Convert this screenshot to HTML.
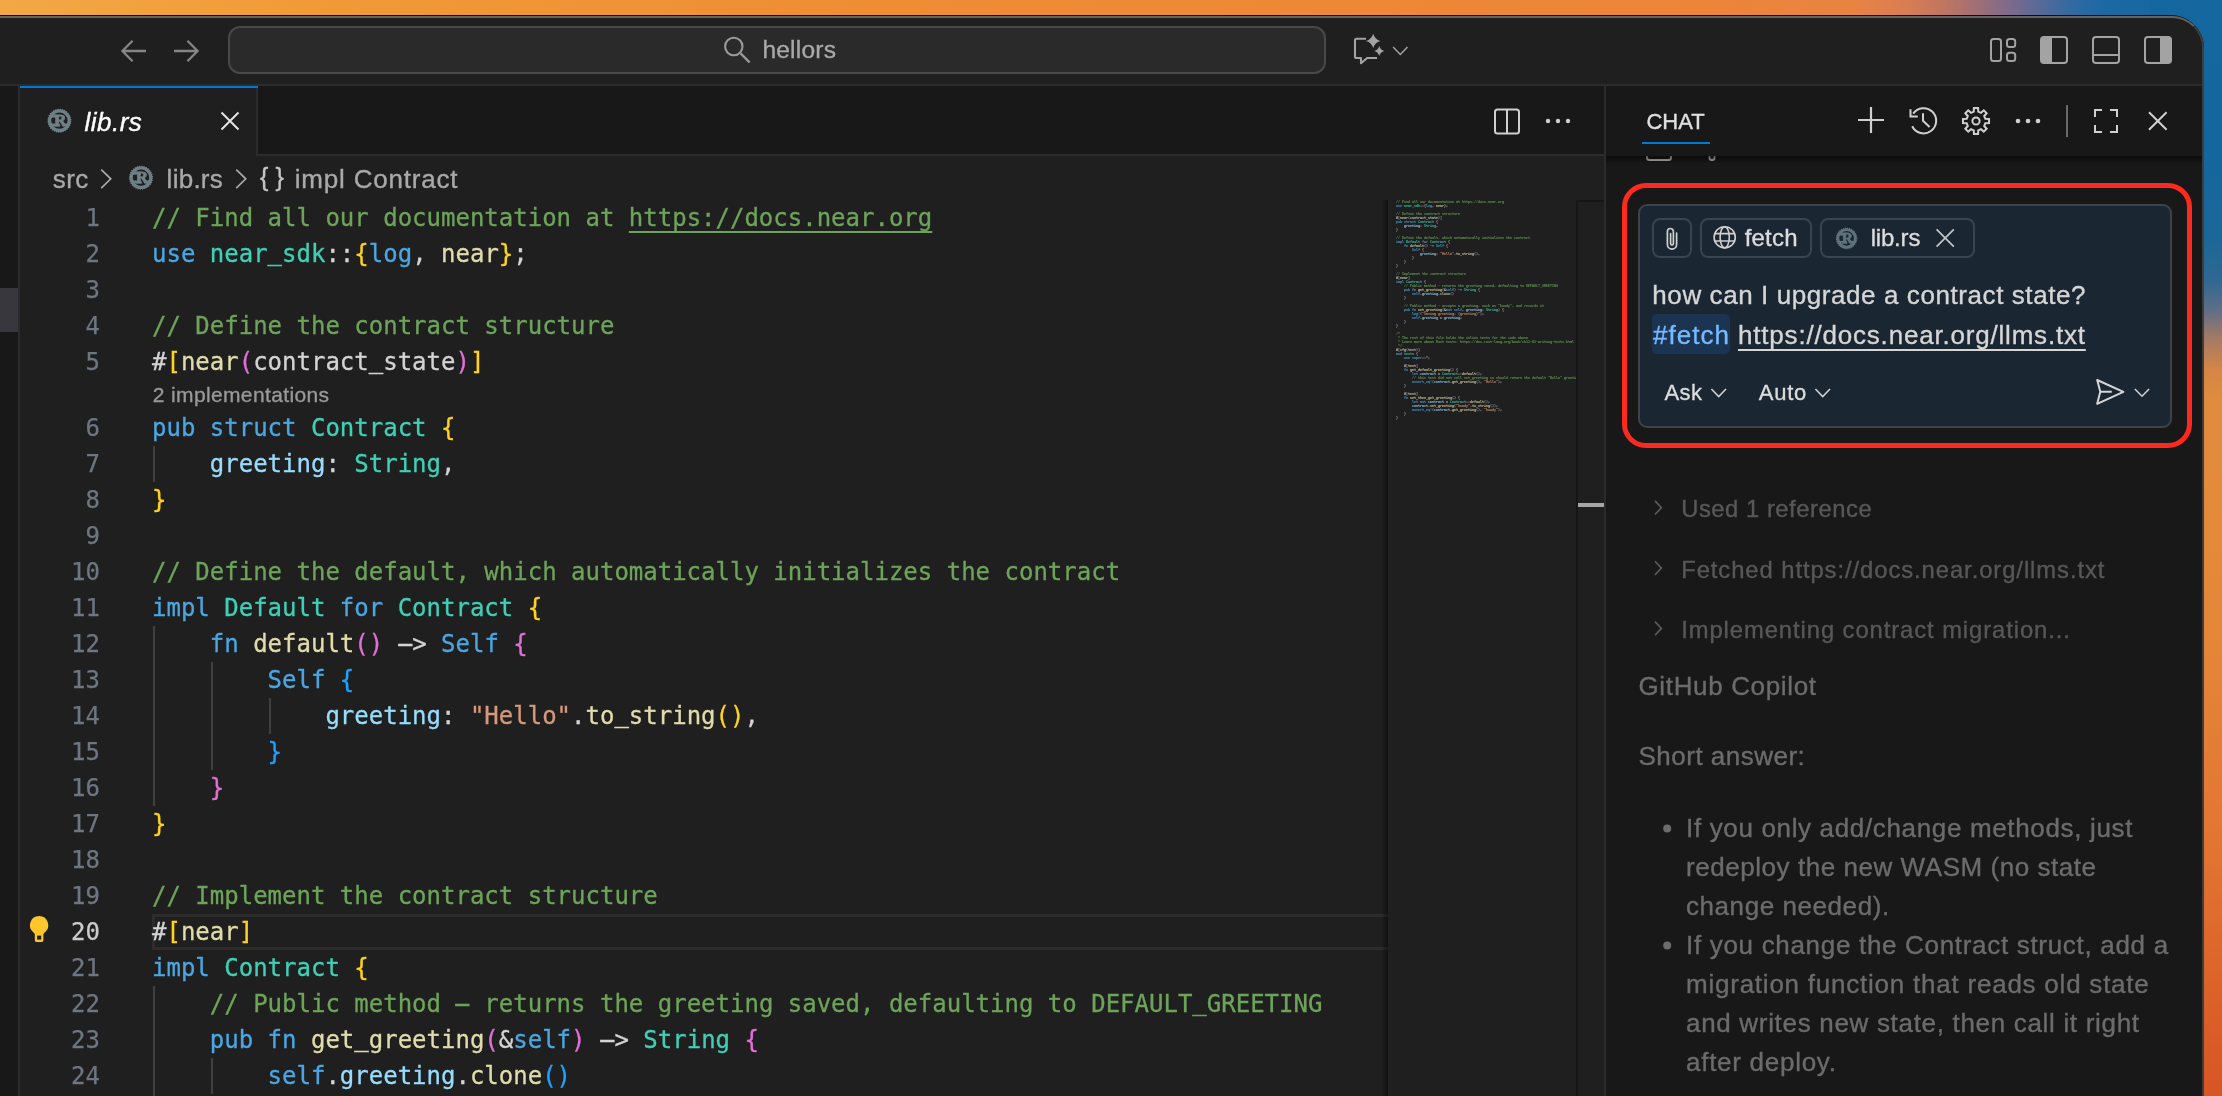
<!DOCTYPE html>
<html lang="en">
<head>
<meta charset="utf-8">
<title>lib.rs — hellors</title>
<style>
*{box-sizing:border-box;margin:0;padding:0}
html,body{width:2222px;height:1096px;overflow:hidden;background:#ee8a3a}
body{position:relative;font-family:"Liberation Sans",sans-serif;color:#ccc;-webkit-font-smoothing:antialiased}
.abs{position:absolute}
#root{position:absolute;left:0;top:0;width:2222px;height:1096px;overflow:hidden;will-change:transform}
svg{position:absolute;overflow:visible}
/* wallpaper */
#wtop{left:0;top:0;width:2222px;height:60px;background:linear-gradient(90deg,#f3a845 0px,#f19a38 300px,#ef8c34 900px,#ec8538 1700px,#e98343 1855px,#d97d54 1905px,#c2765f 1942px,#9d6e78 1980px,#7b6a8d 2012px,#546a9a 2042px,#316aa2 2072px,#1b69a3 2104px,#12679f 2222px)}
#wright{left:2150px;top:0;width:72px;height:1096px;background:linear-gradient(180deg,#15679f 0px,#14669f 150px,#1c6798 240px,#2f6892 280px,#5f6e86 310px,#a87a62 340px,#d58645 370px,#e08b3f 400px,#e48a3b 500px,#e58538 650px,#e27432 850px,#dc6029 1000px,#d85526 1096px)}
#wcorner{left:2040px;top:0;width:182px;height:60px;background:linear-gradient(90deg,rgba(21,103,159,0) 0,rgba(21,103,159,0) 80px,#15679f 170px)}
/* window */
#win{left:-40px;top:15px;width:2244px;height:1200px;background:#181818;border-top-right-radius:33px;overflow:hidden;border:1px solid #0c0c0c}
#winhl{left:-40px;top:16px;width:2244px;height:1200px;border-top-right-radius:32px;border:2px solid #626262;border-right:2px solid #3e3e3e;pointer-events:none}
#title{left:0;top:17px;width:2202px;height:67px;background:#1f1f1f;border-top-right-radius:31px}
#titleb{left:0;top:84px;width:2202px;height:2px;background:#2b2b2b}
#search{left:228px;top:26px;width:1098px;height:48px;border:2px solid #494949;border-radius:12px;background:#2a2a2a}
.t{position:absolute;white-space:pre;line-height:1;-webkit-text-stroke:0.35px currentColor}
/* left strip */
#lstrip{left:0;top:86px;width:18px;height:1010px;background:#181818}
#lstripb{left:18px;top:86px;width:2px;height:1010px;background:#2b2b2b}
#lsel{left:0;top:288px;width:18px;height:44px;background:#37373d}
/* tabs */
#tabbar{left:20px;top:86px;width:1584px;height:69px;background:#181818}
#tabbarb{left:20px;top:154px;width:1584px;height:2px;background:#2b2b2b}
#tab{left:20px;top:86px;width:238px;height:70px;background:#1f1f1f;border-right:2px solid #2b2b2b}
#tabtop{left:20px;top:86px;width:238px;height:2px;background:#0078d4}
#editor{left:20px;top:156px;width:1584px;height:940px;background:#1f1f1f}
/* code */
.ln{position:absolute;left:20px;width:80px;text-align:right;font:24px/36px "DejaVu Sans Mono","Liberation Mono",monospace;color:#6e7681;height:36px;white-space:pre;-webkit-text-stroke:0.25px currentColor}
.cl{position:absolute;left:152px;font:24px/36px "DejaVu Sans Mono","Liberation Mono",monospace;color:#d4d4d4;height:36px;white-space:pre;letter-spacing:0px;-webkit-text-stroke:0.3px currentColor}
.c{color:#6da45a}.k{color:#4ba6e2}.ty{color:#40d0b6}.f{color:#e0dcab}.v{color:#98dcfd}.s{color:#d5987a}
.b1{color:#ffd21f}.b2{color:#e070d8}.b3{color:#1fa2ff}.u{text-decoration:underline;text-underline-offset:5px;text-decoration-thickness:2px;text-decoration-skip-ink:none}
.hy{display:inline-block;transform:scaleX(2.25)}.us{position:relative;top:-2.4px}
.ig{position:absolute;width:2px;background:#404040}

.ln.cur{color:#ccc}
#mmclip{left:1388px;top:200px;width:188px;height:896px;overflow:hidden}
#mm{left:8px;top:0px;width:1400px;transform-origin:0 0;transform:scale(0.1384,0.1111);font:24px/36px "DejaVu Sans Mono","Liberation Mono",monospace;color:#d4d4d4;opacity:.85}
#mm .ml{height:36px;white-space:pre;font-weight:bold}
#mm .b1,#mm .b2,#mm .b3{color:#bbb}
#mm .u{text-decoration:none}
#mmshadow{left:1381px;top:200px;width:7px;height:896px;background:linear-gradient(90deg,rgba(0,0,0,0),rgba(0,0,0,.45))}
#mmslider{display:none}
/* chat */
#pdiv{left:1604px;top:86px;width:2px;height:1010px;background:#2b2b2b}
#chat{left:1606px;top:86px;width:596px;height:1010px;background:#181818}
</style>
</head>
<body>
<div id="root">
<div id="wtop" class="abs"></div>
<div id="wcorner" class="abs"></div>
<div id="wright" class="abs"></div>
<div id="win" class="abs"></div>
<div id="title" class="abs"></div>
<div id="titleb" class="abs"></div>
<div id="lstrip" class="abs"></div>
<div id="lsel" class="abs"></div>
<div id="lstripb" class="abs"></div>
<div id="tabbar" class="abs"></div>
<div id="tabbarb" class="abs"></div>
<div id="tab" class="abs"></div>
<div id="tabtop" class="abs"></div>
<div id="editor" class="abs"></div>
<svg style="left:0;top:0" width="1" height="1"><path d="M146 51H123M132.6 40.8L122.4 51L132.6 61.2" fill="none" stroke="#858585" stroke-width="2.3" /></svg>
<svg style="left:0;top:0" width="1" height="1"><path d="M174 51H197M187.4 40.8L197.6 51L187.4 61.2" fill="none" stroke="#858585" stroke-width="2.3" /></svg>
<div id="search" class="abs"></div>
<svg style="left:0;top:0" width="1" height="1"><path d="M740.6 53.4L749.6 62.4" fill="none" stroke="#9a9a9a" stroke-width="2.2" /></svg><svg style="left:0;top:0" width="1" height="1"><circle cx="733.8" cy="46.5" r="8.7" fill="none" stroke="#9a9a9a" stroke-width="2.1"/></svg>
<div class="t" style="left:762.40px;top:38.38px;font-size:24.6px;color:#a8a8a8;letter-spacing:0.189px;">hellors</div>
<svg style="left:0;top:0" width="1" height="1"><path d="M1366 38.8H1356.5Q1355 38.8 1355 40.3V56.5Q1355 58 1356.5 58H1361V63.2L1367.2 58H1377" fill="none" stroke="#a3a3a3" stroke-width="2.1" stroke-linejoin="round"/></svg>
<svg style="left:0;top:0" width="1" height="1"><path d="M1373.2 33.8Q1374.784 39.416 1380.4 41Q1374.784 42.584 1373.2 48.2Q1371.616 42.584 1366.0 41Q1371.616 39.416 1373.2 33.8Z" fill="#a3a3a3"/></svg>
<svg style="left:0;top:0" width="1" height="1"><path d="M1379.3 46Q1380.3999999999999 49.9 1384.3 51Q1380.3999999999999 52.1 1379.3 56Q1378.2 52.1 1374.3 51Q1378.2 49.9 1379.3 46Z" fill="#a3a3a3"/></svg>
<svg style="left:0;top:0" width="1" height="1"><path d="M1393.10 47.00L1400.30 54.40L1407.50 47.00" fill="none" stroke="#a3a3a3" stroke-width="1.5"/></svg>
<svg style="left:0;top:0" width="1" height="1"><g fill="none" stroke="#a3a3a3" stroke-width="2"><rect x="1991" y="39" width="10" height="22" rx="2.5"/><rect x="2007" y="39" width="8.2" height="8" rx="2.5"/><rect x="2007" y="52.8" width="8.2" height="8.2" rx="2.5"/><rect x="2041" y="37" width="26" height="26" rx="3"/><rect x="2093" y="37" width="26" height="26" rx="3"/><rect x="2145" y="37" width="26" height="26" rx="3"/><path d="M2093 55H2119"/></g><path d="M2043 37H2052V63H2043Q2041 63 2041 61V39Q2041 37 2043 37Z" fill="#a3a3a3"/><path d="M2169 37H2160V63H2169Q2171 63 2171 61V39Q2171 37 2169 37Z" fill="#a3a3a3"/></svg>
<svg style="left:0;top:0" width="1" height="1"><g transform="translate(59.40,120.70) scale(0.9590)"><circle cx="0" cy="0" r="10.2" fill="#1f1f1f" stroke="#6d8086" stroke-width="3.4"/><circle cx="0" cy="0" r="11.8" fill="none" stroke="#6d8086" stroke-width="1.5" stroke-dasharray="1.16 1.157"/><rect x="-9" y="-6.2" width="9" height="3" fill="#6d8086"/><rect x="-9" y="2.9" width="9.4" height="3" fill="#6d8086"/><rect x="3.4" y="2.9" width="6" height="3" fill="#6d8086"/><text x="0.9" y="5.9" text-anchor="middle" font-family="Liberation Serif,serif" font-weight="bold" font-size="18" fill="#6d8086" stroke="#6d8086" stroke-width="0.9">R</text></g></svg>
<div class="t" style="left:84.50px;top:108.59px;font-size:26px;color:#ffffff;letter-spacing:0.481px;font-style:italic;">lib.rs</div>
<svg style="left:0;top:0" width="1" height="1"><path d="M221.5 112.5L238.5 129.5M238.5 112.5L221.5 129.5" fill="none" stroke="#e4e4e4" stroke-width="2" /></svg>
<div class="t" style="left:52.70px;top:166.19px;font-size:26px;color:#a9a9a9;letter-spacing:0.471px;">src</div>
<svg style="left:0;top:0" width="1" height="1"><path d="M101.25 169.55L110.75 178.80L101.25 188.05" fill="none" stroke="#a9a9a9" stroke-width="1.7"/></svg>
<svg style="left:0;top:0" width="1" height="1"><g transform="translate(141.00,177.70) scale(0.9590)"><circle cx="0" cy="0" r="10.2" fill="#1f1f1f" stroke="#6d8086" stroke-width="3.4"/><circle cx="0" cy="0" r="11.8" fill="none" stroke="#6d8086" stroke-width="1.5" stroke-dasharray="1.16 1.157"/><rect x="-9" y="-6.2" width="9" height="3" fill="#6d8086"/><rect x="-9" y="2.9" width="9.4" height="3" fill="#6d8086"/><rect x="3.4" y="2.9" width="6" height="3" fill="#6d8086"/><text x="0.9" y="5.9" text-anchor="middle" font-family="Liberation Serif,serif" font-weight="bold" font-size="18" fill="#6d8086" stroke="#6d8086" stroke-width="0.9">R</text></g></svg>
<div class="t" style="left:166.60px;top:166.19px;font-size:26px;color:#a9a9a9;letter-spacing:0.261px;">lib.rs</div>
<svg style="left:0;top:0" width="1" height="1"><path d="M236.25 169.55L245.75 178.80L236.25 188.05" fill="none" stroke="#a9a9a9" stroke-width="1.7"/></svg>
<div class="t" style="left:259.90px;top:164.84px;font-size:25px;color:#c5c5c5;letter-spacing:0.000px;">{</div>
<div class="t" style="left:275.60px;top:164.84px;font-size:25px;color:#c5c5c5;letter-spacing:0.000px;">}</div>
<div class="t" style="left:294.80px;top:166.19px;font-size:26px;color:#a9a9a9;letter-spacing:0.787px;">impl Contract</div>
<svg style="left:0;top:0" width="1" height="1"><g fill="none" stroke="#d0d0d0" stroke-width="2"><rect x="1495" y="109.5" width="24" height="24" rx="2.5"/><path d="M1507 109.5V133.5"/></g><g fill="#d0d0d0"><circle cx="1548" cy="121" r="2.2"/><circle cx="1558" cy="121" r="2.2"/><circle cx="1568" cy="121" r="2.2"/></g></svg>

<div class="abs" style="left:152px;top:914px;width:1236px;height:35.6px;border:3px solid #2c2c2c;border-right:0"></div>
<div class="ig" style="left:153px;top:446px;height:36px"></div>
<div class="ig" style="left:153px;top:626px;height:180px"></div>
<div class="ig" style="left:211px;top:662px;height:108px"></div>
<div class="ig" style="left:269px;top:698px;height:36px"></div>
<div class="ig" style="left:153px;top:986px;height:144px"></div>
<div class="ig" style="left:211px;top:1058px;height:36px"></div>
<div class="ln" style="top:200px">1</div>
<div class="cl" style="top:200px"><span class="c">// Find all our documentation at </span><span class="c u">https://docs.near.org</span></div>
<div class="ln" style="top:236px">2</div>
<div class="cl" style="top:236px"><span class="k">use </span><span class="ty">near<span class="us">_</span>sdk</span>::<span class="b1">{</span><span class="k">log</span>, <span class="f">near</span><span class="b1">}</span>;</div>
<div class="ln" style="top:272px">3</div>
<div class="ln" style="top:308px">4</div>
<div class="cl" style="top:308px"><span class="c">// Define the contract structure</span></div>
<div class="ln" style="top:344px">5</div>
<div class="cl" style="top:344px">#<span class="b1">[</span><span class="f">near</span><span class="b2">(</span>contract<span class="us">_</span>state<span class="b2">)</span><span class="b1">]</span></div>
<div class="ln" style="top:410px">6</div>
<div class="cl" style="top:410px"><span class="k">pub struct </span><span class="ty">Contract</span> <span class="b1">{</span></div>
<div class="ln" style="top:446px">7</div>
<div class="cl" style="top:446px">    <span class="v">greeting</span>: <span class="ty">String</span>,</div>
<div class="ln" style="top:482px">8</div>
<div class="cl" style="top:482px"><span class="b1">}</span></div>
<div class="ln" style="top:518px">9</div>
<div class="ln" style="top:554px">10</div>
<div class="cl" style="top:554px"><span class="c">// Define the default, which automatically initializes the contract</span></div>
<div class="ln" style="top:590px">11</div>
<div class="cl" style="top:590px"><span class="k">impl </span><span class="ty">Default</span><span class="k"> for </span><span class="ty">Contract</span> <span class="b1">{</span></div>
<div class="ln" style="top:626px">12</div>
<div class="cl" style="top:626px">    <span class="k">fn </span><span class="f">default</span><span class="b2">()</span> <span class="hy">-</span>&gt; <span class="k">Self</span> <span class="b2">{</span></div>
<div class="ln" style="top:662px">13</div>
<div class="cl" style="top:662px">        <span class="k">Self</span> <span class="b3">{</span></div>
<div class="ln" style="top:698px">14</div>
<div class="cl" style="top:698px">            <span class="v">greeting</span>: <span class="s">&quot;Hello&quot;</span>.<span class="f">to<span class="us">_</span>string</span><span class="b1">()</span>,</div>
<div class="ln" style="top:734px">15</div>
<div class="cl" style="top:734px">        <span class="b3">}</span></div>
<div class="ln" style="top:770px">16</div>
<div class="cl" style="top:770px">    <span class="b2">}</span></div>
<div class="ln" style="top:806px">17</div>
<div class="cl" style="top:806px"><span class="b1">}</span></div>
<div class="ln" style="top:842px">18</div>
<div class="ln" style="top:878px">19</div>
<div class="cl" style="top:878px"><span class="c">// Implement the contract structure</span></div>
<div class="ln cur" style="top:914px">20</div>
<div class="cl" style="top:914px">#<span class="b1">[</span><span class="f">near</span><span class="b1">]</span></div>
<div class="ln" style="top:950px">21</div>
<div class="cl" style="top:950px"><span class="k">impl </span><span class="ty">Contract</span> <span class="b1">{</span></div>
<div class="ln" style="top:986px">22</div>
<div class="cl" style="top:986px">    <span class="c">// Public method <span class="hy">-</span> returns the greeting saved, defaulting to DEFAULT<span class="us">_</span>GREETING</span></div>
<div class="ln" style="top:1022px">23</div>
<div class="cl" style="top:1022px">    <span class="k">pub fn </span><span class="f">get<span class="us">_</span>greeting</span><span class="b2">(</span>&amp;<span class="k">self</span><span class="b2">)</span> <span class="hy">-</span>&gt; <span class="ty">String</span> <span class="b2">{</span></div>
<div class="ln" style="top:1058px">24</div>
<div class="cl" style="top:1058px">        <span class="k">self</span>.<span class="v">greeting</span>.<span class="f">clone</span><span class="b3">()</span></div>
<div class="t" style="left:152.80px;top:384.22px;font-size:21px;color:#999999;letter-spacing:0.361px;">2 implementations</div>
<svg style="left:0;top:0" width="1" height="1"><path d="M39.1 916.1a9.1 9.1 0 0 0-5.6 16.3c.9.8 1.3 1.4 1.3 2.3v5.6a1.7 1.7 0 0 0 1.7 1.7h5.2a1.7 1.7 0 0 0 1.7-1.7v-5.6c0-.9.4-1.5 1.3-2.3a9.1 9.1 0 0 0-5.6-16.3z" fill="#ffc72c"/><rect x="37.1" y="935.6" width="4.1" height="4" fill="#1f1f1f"/></svg>
<div id="mmshadow" class="abs"></div>
<div id="mmslider" class="abs"></div>
<div id="mmclip" class="abs"><div id="mm" class="abs"><div class="ml"><span class="c">// Find all our documentation at </span><span class="c u">https://docs.near.org</span></div><div class="ml"><span class="k">use </span><span class="ty">near_sdk</span>::<span class="b1">{</span><span class="k">log</span>, <span class="f">near</span><span class="b1">}</span>;</div><div class="ml"> </div><div class="ml"><span class="c">// Define the contract structure</span></div><div class="ml">#<span class="b1">[</span><span class="f">near</span><span class="b2">(</span>contract_state<span class="b2">)</span><span class="b1">]</span></div><div class="ml"><span class="k">pub struct </span><span class="ty">Contract</span> <span class="b1">{</span></div><div class="ml">    <span class="v">greeting</span>: <span class="ty">String</span>,</div><div class="ml"><span class="b1">}</span></div><div class="ml"> </div><div class="ml"><span class="c">// Define the default, which automatically initializes the contract</span></div><div class="ml"><span class="k">impl </span><span class="ty">Default</span><span class="k"> for </span><span class="ty">Contract</span> <span class="b1">{</span></div><div class="ml">    <span class="k">fn </span><span class="f">default</span><span class="b2">()</span> -&gt; <span class="k">Self</span> <span class="b2">{</span></div><div class="ml">        <span class="k">Self</span> <span class="b3">{</span></div><div class="ml">            <span class="v">greeting</span>: <span class="s">&quot;Hello&quot;</span>.<span class="f">to_string</span><span class="b1">()</span>,</div><div class="ml">        <span class="b3">}</span></div><div class="ml">    <span class="b2">}</span></div><div class="ml"><span class="b1">}</span></div><div class="ml"> </div><div class="ml"><span class="c">// Implement the contract structure</span></div><div class="ml">#<span class="b1">[</span><span class="f">near</span><span class="b1">]</span></div><div class="ml"><span class="k">impl </span><span class="ty">Contract</span> <span class="b1">{</span></div><div class="ml">    <span class="c">// Public method - returns the greeting saved, defaulting to DEFAULT_GREETING</span></div><div class="ml">    <span class="k">pub fn </span><span class="f">get_greeting</span><span class="b2">(</span>&amp;<span class="k">self</span><span class="b2">)</span> -&gt; <span class="ty">String</span> <span class="b2">{</span></div><div class="ml">        <span class="k">self</span>.<span class="v">greeting</span>.<span class="f">clone</span><span class="b3">()</span></div><div class="ml">    <span class="b2">}</span></div><div class="ml"> </div><div class="ml">    <span class="c">// Public method - accepts a greeting, such as &quot;howdy&quot;, and records it</span></div><div class="ml">    <span class="k">pub fn </span><span class="f">set_greeting</span><span class="b2">(</span>&amp;<span class="k">mut self</span>, <span class="v">greeting</span>: <span class="ty">String</span><span class="b2">)</span> <span class="b2">{</span></div><div class="ml">        <span class="k">log!</span><span class="b3">(</span><span class="s">&quot;Saving greeting: {greeting}&quot;</span><span class="b3">)</span>;</div><div class="ml">        <span class="k">self</span>.<span class="v">greeting</span> = <span class="v">greeting</span>;</div><div class="ml">    <span class="b2">}</span></div><div class="ml"><span class="b1">}</span></div><div class="ml"> </div><div class="ml"><span class="c">/*</span></div><div class="ml"><span class="c"> * The rest of this file holds the inline tests for the code above</span></div><div class="ml"><span class="c"> * Learn more about Rust tests: https://doc.rust-lang.org/book/ch11-01-writing-tests.html</span></div><div class="ml"><span class="c"> */</span></div><div class="ml">#<span class="b1">[</span><span class="f">cfg</span><span class="b2">(</span>test<span class="b2">)</span><span class="b1">]</span></div><div class="ml"><span class="k">mod </span><span class="ty">tests</span> <span class="b1">{</span></div><div class="ml">    <span class="k">use super</span>::*;</div><div class="ml"> </div><div class="ml">    #<span class="b2">[</span><span class="f">test</span><span class="b2">]</span></div><div class="ml">    <span class="k">fn </span><span class="f">get_default_greeting</span><span class="b2">()</span> <span class="b2">{</span></div><div class="ml">        <span class="k">let </span><span class="v">contract</span> = <span class="ty">Contract</span>::<span class="f">default</span><span class="b3">()</span>;</div><div class="ml">        <span class="c">// this test did not call set_greeting so should return the default &quot;Hello&quot; greeting</span></div><div class="ml">        <span class="k">assert_eq!</span><span class="b3">(</span><span class="v">contract</span>.<span class="f">get_greeting</span><span class="b1">()</span>, <span class="s">&quot;Hello&quot;</span><span class="b3">)</span>;</div><div class="ml">    <span class="b2">}</span></div><div class="ml"> </div><div class="ml">    #<span class="b2">[</span><span class="f">test</span><span class="b2">]</span></div><div class="ml">    <span class="k">fn </span><span class="f">set_then_get_greeting</span><span class="b2">()</span> <span class="b2">{</span></div><div class="ml">        <span class="k">let mut </span><span class="v">contract</span> = <span class="ty">Contract</span>::<span class="f">default</span><span class="b3">()</span>;</div><div class="ml">        <span class="v">contract</span>.<span class="f">set_greeting</span><span class="b3">(</span><span class="s">&quot;howdy&quot;</span>.<span class="f">to_string</span><span class="b1">()</span><span class="b3">)</span>;</div><div class="ml">        <span class="k">assert_eq!</span><span class="b3">(</span><span class="v">contract</span>.<span class="f">get_greeting</span><span class="b1">()</span>, <span class="s">&quot;howdy&quot;</span><span class="b3">)</span>;</div><div class="ml">    <span class="b2">}</span></div><div class="ml"><span class="b1">}</span></div></div></div>
<div class="abs" style="left:1576px;top:200px;width:28px;height:896px;border-left:2px solid #161616;border-top:2px solid #161616"></div>
<div class="abs" style="left:1578px;top:503px;width:26px;height:4px;background:#a6a6a6"></div>

<div id="pdiv" class="abs"></div>
<div id="chat" class="abs"></div>
<div class="t" style="left:1646.40px;top:110.68px;font-size:22px;color:#e0e0e0;letter-spacing:0.048px;">CHAT</div>
<div class="abs" style="left:1642px;top:142px;width:68px;height:2px;background:#0078d4"></div>
<svg style="left:0;top:0" width="1" height="1"><path d="M1871 107V133M1858 120H1884" fill="none" stroke="#d0d0d0" stroke-width="2.2" /></svg>
<svg style="left:0;top:0" width="1" height="1"><path d="M1913.2 113.6A12.6 12.6 0 1 1 1912.2 126.2M1910.5 109.3V116.6H1917.8M1923 113.2V120.8L1929.6 127" fill="none" stroke="#d0d0d0" stroke-width="2" /></svg>
<svg style="left:0;top:0" width="1" height="1"><path d="M1973.94 107.96L1978.06 107.96L1978.24 111.67L1981.02 112.81L1983.76 110.32L1986.68 113.24L1984.19 115.98L1985.33 118.76L1989.04 118.94L1989.04 123.06L1985.33 123.24L1984.19 126.02L1986.68 128.76L1983.76 131.68L1981.02 129.19L1978.24 130.33L1978.06 134.04L1973.94 134.04L1973.76 130.33L1970.98 129.19L1968.24 131.68L1965.32 128.76L1967.81 126.02L1966.67 123.24L1962.96 123.06L1962.96 118.94L1966.67 118.76L1967.81 115.98L1965.32 113.24L1968.24 110.32L1970.98 112.81L1973.76 111.67Z" fill="none" stroke="#d0d0d0" stroke-width="2" stroke-linejoin="miter"/></svg>
<svg style="left:0;top:0" width="1" height="1"><circle cx="1976" cy="121" r="3.6" fill="none" stroke="#d0d0d0" stroke-width="2"/><g fill="#d0d0d0"><circle cx="2018" cy="121" r="2.3"/><circle cx="2028" cy="121" r="2.3"/><circle cx="2038" cy="121" r="2.3"/></g></svg>
<div class="abs" style="left:2066px;top:105px;width:2px;height:32px;background:#6a6a6a"></div>
<svg style="left:0;top:0" width="1" height="1"><path d="M2095 117V110H2102M2110 110H2117V117M2117 125V132H2110M2102 132H2095V125" fill="none" stroke="#d0d0d0" stroke-width="2" /></svg>
<svg style="left:0;top:0" width="1" height="1"><path d="M2149 112.2L2166.6 129.8M2166.6 112.2L2149 129.8" fill="none" stroke="#d0d0d0" stroke-width="2" /></svg>
<svg style="left:0;top:0" width="1" height="1"><path d="M1647 154V157.5Q1647 160 1649.5 160H1668.5Q1671 160 1671 157.5V154" fill="none" stroke="#b8b8b8" stroke-width="2" /></svg>
<svg style="left:0;top:0" width="1" height="1"><path d="M1709.5 154V157.5Q1709.5 160 1712 160Q1714.5 160 1714.5 157.5V154" fill="none" stroke="#b8b8b8" stroke-width="2" /></svg>
<div class="abs" style="left:1606px;top:156px;width:596px;height:8px;background:linear-gradient(180deg,rgba(0,0,0,.55),rgba(0,0,0,0))"></div>
<div class="abs" style="left:1606px;top:154px;width:596px;height:2px;background:#181818"></div>
<div class="abs" style="left:1621.5px;top:183.3px;width:570.5px;height:264.5px;border:5.8px solid #ff2a1f;border-radius:24px"></div>
<div class="abs" style="left:1638px;top:204px;width:534px;height:224px;border:2px solid #3f4347;border-radius:9px;background:#1a2733"></div>
<div class="abs" style="left:1652px;top:218px;width:40px;height:40px;border:2px solid #36454f;border-radius:8px"></div>
<div class="abs" style="left:1700px;top:218px;width:112px;height:40px;border:2px solid #36454f;border-radius:8px"></div>
<div class="abs" style="left:1820px;top:218px;width:155px;height:40px;border:2px solid #36454f;border-radius:8px"></div>
<svg style="left:0;top:0" width="1" height="1"><path d="M1676.6 233V244.5A4.6 4.6 0 0 1 1667.4 244.5V231.5A3 3 0 0 1 1673.4 231.5V243.5A1.4 1.4 0 0 1 1670.6 243.5V233.5" fill="none" stroke="#d0d0d0" stroke-width="1.7" stroke-linecap="round"/></svg>
<svg style="left:0;top:0" width="1" height="1"><g fill="none" stroke="#d0d0d0" stroke-width="1.6"><circle cx="1724.7" cy="237.3" r="10.6"/><ellipse cx="1724.7" cy="237.3" rx="4.6" ry="10.6"/><path d="M1714.6 233.6H1734.8M1714.6 241H1734.8"/></g></svg>
<div class="t" style="left:1744.70px;top:225.88px;font-size:24px;color:#dcdcdc;letter-spacing:0.192px;">fetch</div>
<svg style="left:0;top:0" width="1" height="1"><g transform="translate(1846.60,238.40) scale(0.8607)"><circle cx="0" cy="0" r="10.2" fill="#1a2733" stroke="#61727c" stroke-width="3.4"/><circle cx="0" cy="0" r="11.8" fill="none" stroke="#61727c" stroke-width="1.5" stroke-dasharray="1.16 1.157"/><rect x="-9" y="-6.2" width="9" height="3" fill="#61727c"/><rect x="-9" y="2.9" width="9.4" height="3" fill="#61727c"/><rect x="3.4" y="2.9" width="6" height="3" fill="#61727c"/><text x="0.9" y="5.9" text-anchor="middle" font-family="Liberation Serif,serif" font-weight="bold" font-size="18" fill="#61727c" stroke="#61727c" stroke-width="0.9">R</text></g></svg>
<div class="t" style="left:1870.70px;top:225.88px;font-size:24px;color:#dcdcdc;letter-spacing:-0.194px;">lib.rs</div>
<svg style="left:0;top:0" width="1" height="1"><path d="M1936.6 229.4L1953.8 246.6M1953.8 229.4L1936.6 246.6" fill="none" stroke="#c4c4c4" stroke-width="1.7" /></svg>
<div class="t" style="left:1652.30px;top:282.19px;font-size:26px;color:#d6d6d6;letter-spacing:0.583px;">how can I upgrade a contract state?</div>
<div class="abs" style="left:1652px;top:314px;width:78px;height:40px;background:#1a3451;border-radius:5px"></div>
<div class="t" style="left:1653.00px;top:321.69px;font-size:26px;color:#78b8ff;letter-spacing:1.035px;">#fetch</div>
<div class="t" style="left:1738.00px;top:321.69px;font-size:26px;color:#d6d6d6;letter-spacing:0.804px;text-decoration:underline;text-underline-offset:4.5px;text-decoration-thickness:1.6px;text-decoration-skip-ink:none;">https://docs.near.org/llms.txt</div>
<div class="t" style="left:1664.50px;top:381.98px;font-size:22px;color:#dcdcdc;letter-spacing:0.413px;">Ask</div>
<svg style="left:0;top:0" width="1" height="1"><path d="M1711.40 389.05L1718.70 396.55L1726.00 389.05" fill="none" stroke="#d0d0d0" stroke-width="1.6"/></svg>
<div class="t" style="left:1758.80px;top:381.98px;font-size:22px;color:#dcdcdc;letter-spacing:0.748px;">Auto</div>
<svg style="left:0;top:0" width="1" height="1"><path d="M1815.40 389.05L1822.70 396.55L1830.00 389.05" fill="none" stroke="#d0d0d0" stroke-width="1.6"/></svg>
<svg style="left:0;top:0" width="1" height="1"><path d="M2097.2 380L2123.4 391.8L2097.2 403.8L2100.3 391.8ZM2100.3 391.8H2111.8" fill="none" stroke="#d6d6d6" stroke-width="2" stroke-linejoin="round"/></svg>
<svg style="left:0;top:0" width="1" height="1"><path d="M2134.90 389.00L2142.00 396.20L2149.10 389.00" fill="none" stroke="#d0d0d0" stroke-width="1.6"/></svg>
<svg style="left:0;top:0" width="1" height="1"><path d="M1655.00 500.90L1661.40 507.70L1655.00 514.50" fill="none" stroke="#5c5c5c" stroke-width="1.6"/></svg>
<div class="t" style="left:1681.20px;top:497.15px;font-size:23.8px;color:#585858;letter-spacing:0.529px;">Used 1 reference</div>
<svg style="left:0;top:0" width="1" height="1"><path d="M1655.00 561.30L1661.40 568.10L1655.00 574.90" fill="none" stroke="#5c5c5c" stroke-width="1.6"/></svg>
<div class="t" style="left:1681.20px;top:557.55px;font-size:23.8px;color:#585858;letter-spacing:0.929px;">Fetched https://docs.near.org/llms.txt</div>
<svg style="left:0;top:0" width="1" height="1"><path d="M1655.00 621.60L1661.40 628.40L1655.00 635.20" fill="none" stroke="#5c5c5c" stroke-width="1.6"/></svg>
<div class="t" style="left:1681.20px;top:617.85px;font-size:23.8px;color:#585858;letter-spacing:0.919px;">Implementing contract migration...</div>
<div class="t" style="left:1638.50px;top:672.79px;font-size:26px;color:#6c6c6c;letter-spacing:0.648px;">GitHub Copilot</div>
<div class="t" style="left:1638.50px;top:743.39px;font-size:26px;color:#6c6c6c;letter-spacing:0.491px;">Short answer:</div>
<div class="t" style="left:1686.00px;top:814.89px;font-size:26px;color:#6c6c6c;letter-spacing:0.655px;">If you only add/change methods, just</div>
<div class="t" style="left:1686.00px;top:853.89px;font-size:26px;color:#6c6c6c;letter-spacing:0.551px;">redeploy the new WASM (no state</div>
<div class="t" style="left:1686.00px;top:892.89px;font-size:26px;color:#6c6c6c;letter-spacing:0.567px;">change needed).</div>
<div class="t" style="left:1686.00px;top:931.89px;font-size:26px;color:#6c6c6c;letter-spacing:0.688px;">If you change the Contract struct, add a</div>
<div class="t" style="left:1686.00px;top:970.89px;font-size:26px;color:#6c6c6c;letter-spacing:0.769px;">migration function that reads old state</div>
<div class="t" style="left:1686.00px;top:1009.89px;font-size:26px;color:#6c6c6c;letter-spacing:0.684px;">and writes new state, then call it right</div>
<div class="t" style="left:1686.00px;top:1048.89px;font-size:26px;color:#6c6c6c;letter-spacing:0.728px;">after deploy.</div>
<svg style="left:0;top:0" width="1" height="1"><g fill="#6c6c6c"><circle cx="1667.2" cy="828.6" r="4"/><circle cx="1667.2" cy="945.6" r="4"/></g></svg>

<div id="winhl" class="abs"></div>
</div>
</body>
</html>
